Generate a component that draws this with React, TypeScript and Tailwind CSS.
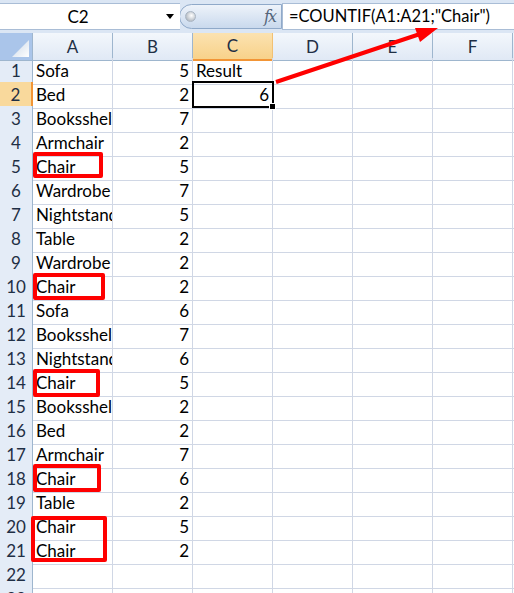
import React from "react";

const rows: [string, string, string][] = [
  ["Sofa", "5", "Result"],
  ["Bed", "2", "6"],
  ["Booksshelf", "7", ""],
  ["Armchair", "2", ""],
  ["Chair", "5", ""],
  ["Wardrobe", "7", ""],
  ["Nightstand", "5", ""],
  ["Table", "2", ""],
  ["Wardrobe", "2", ""],
  ["Chair", "2", ""],
  ["Sofa", "6", ""],
  ["Booksshelf", "7", ""],
  ["Nightstand", "6", ""],
  ["Chair", "5", ""],
  ["Booksshelf", "2", ""],
  ["Bed", "2", ""],
  ["Armchair", "7", ""],
  ["Chair", "6", ""],
  ["Table", "2", ""],
  ["Chair", "5", ""],
  ["Chair", "2", ""],
  ["", "", ""],
  ["", "", ""],
];

const cols = ["A", "B", "C", "D", "E", "F"];

export default function App() {
  return (
    <div className="relative w-[514px] h-[593px] overflow-hidden bg-white text-[17px] text-black font-['Lato',sans-serif]">
      {/* Formula bar */}
      <div className="flex h-[33px] bg-[#dbe6f4] pt-[3px] pb-[3px]">
        <div className="flex w-[180px] items-center bg-white border-t border-b border-[#a9bdd6] relative">
          <div className="flex-1 text-center pr-[10px]">C2</div>
          <div className="w-0 h-0 mr-[6px] border-l-[4px] border-r-[4px] border-t-[5px] border-l-transparent border-r-transparent border-t-black"></div>
        </div>
        <div className="flex w-[103px] items-center self-center h-[25px] -ml-[1px] rounded-l-full border border-[#8fa9c9] bg-gradient-to-b from-[#eef3fa] to-[#c9d9ed]">
          <div className="ml-[5px] h-[11px] w-[11px] rounded-full bg-[radial-gradient(circle_at_60%_40%,#ffffff,#9aa3ae)] border border-[#a8b4c2]"></div>
          <div className="flex-1"></div>
          <div className="mr-[6px] italic text-[16px] text-[#55657a] font-['DejaVu_Serif',serif] tracking-[-2px]">fx</div>
        </div>
        <div className="flex flex-1 items-center bg-white border-t border-b border-l border-[#a9bdd6] pl-[6px] text-[16.5px]">
          =COUNTIF(A1:A21;"Chair")
        </div>
      </div>

      {/* Column headers */}
      <div className="grid grid-cols-[33px_repeat(6,80px)_1fr] h-[25px]">
        <div className="relative bg-[#aac5ea] border-r border-b border-[#9eb6ce] overflow-hidden">
          <svg className="absolute right-[3px] bottom-[3px]" width="17" height="17" viewBox="0 0 17 17">
            <defs>
              <linearGradient id="tri" x1="0" y1="0" x2="1" y2="1">
                <stop offset="0" stopColor="#c9d6e6" />
                <stop offset="1" stopColor="#ffffff" />
              </linearGradient>
            </defs>
            <polygon points="17,0 17,17 0,17" fill="url(#tri)" />
          </svg>
        </div>
        {cols.map((c) => (
          <div
            key={c}
            className={
              c === "C"
                ? "flex items-center justify-center border-r border-b-2 border-r-[#f2c173] border-b-[#f29536] bg-gradient-to-b from-[#fbe2b0] to-[#f8d28a] text-[#1f2f45]"
                : "flex items-center justify-center border-r border-b border-[#9eb6ce] bg-gradient-to-b from-[#f3f7fc] to-[#e0e9f5] text-[#1f2f45]"
            }
          >
            {c}
          </div>
        ))}
        <div className="border-b border-[#9eb6ce] bg-gradient-to-b from-[#f3f7fc] to-[#e0e9f5]"></div>
      </div>

      {/* Rows */}
      {rows.map((r, i) => {
        const n = i + 1;
        const sel = n === 2;
        return (
          <div key={n} className="grid grid-cols-[33px_repeat(6,80px)_1fr] h-[24px]">
            <div
              className={
                sel
                  ? "flex items-center justify-center border-r-2 border-b border-r-[#f29536] border-b-[#f2c173] bg-[#f9d99c] text-[#1f2f45]"
                  : "flex items-center justify-center border-r border-b border-r-[#9eb6ce] border-b-[#c5d3e6] bg-[#e4ecf7] text-[#1f2f45]"
              }
            >
              {n}
            </div>
            <div className="flex items-center overflow-hidden whitespace-nowrap border-r border-b border-[#d0d7e5] px-[3px]">
              {r[0]}
            </div>
            <div className="flex items-center justify-end overflow-hidden whitespace-nowrap border-r border-b border-[#d0d7e5] px-[3px]">
              {r[1]}
            </div>
            <div
              className={
                "flex items-center overflow-hidden whitespace-nowrap border-r border-b border-[#d0d7e5] px-[3px] " +
                (n === 2 ? "justify-end" : "justify-start")
              }
            >
              {r[2]}
            </div>
            <div className="border-r border-b border-[#d0d7e5]"></div>
            <div className="border-r border-b border-[#d0d7e5]"></div>
            <div className="border-r border-b border-[#d0d7e5]"></div>
            <div className="border-b border-[#d0d7e5]"></div>
          </div>
        );
      })}

      {/* Active cell */}
      <div className="absolute left-[192px] top-[81px] w-[82px] h-[27px] border-[2px] border-black"></div>
      <div className="absolute left-[269px] top-[103px] w-[7px] h-[7px] bg-black border border-white"></div>

      {/* Red boxes */}
      <div className="absolute left-[33px] top-[152px] w-[70px] h-[26px] border-[4px] border-[#ff0000] rounded-[2px]"></div>
      <div className="absolute left-[33px] top-[273px] w-[72px] h-[27px] border-[4px] border-[#ff0000] rounded-[2px]"></div>
      <div className="absolute left-[33px] top-[369px] w-[67px] h-[28px] border-[4px] border-[#ff0000] rounded-[2px]"></div>
      <div className="absolute left-[33px] top-[464px] w-[68px] h-[28px] border-[4px] border-[#ff0000] rounded-[2px]"></div>
      <div className="absolute left-[31px] top-[516px] w-[76px] h-[46px] border-[4px] border-[#ff0000] rounded-[2px]"></div>

      {/* Arrow */}
      <svg className="absolute left-0 top-0 pointer-events-none" width="514" height="593" viewBox="0 0 514 593">
        <line x1="276" y1="82" x2="420" y2="34" stroke="#ff0000" strokeWidth="4" />
        <polygon points="438,28 415,28 420,42" fill="#ff0000" />
      </svg>
    </div>
  );
}
